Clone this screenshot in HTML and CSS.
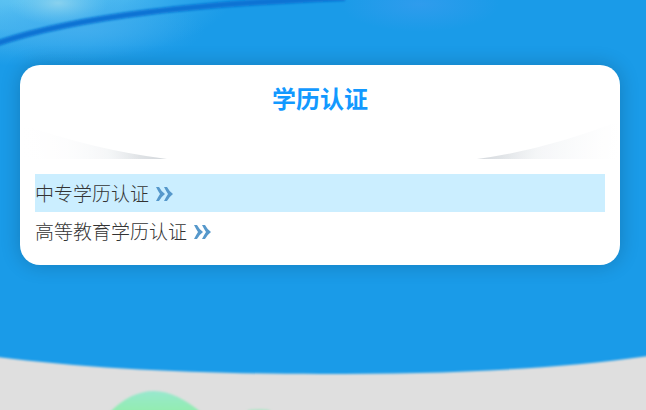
FILE: index.html
```html
<!DOCTYPE html>
<html lang="zh-CN">

<head>
    <meta charset="UTF-8">
    <meta name="viewport" content="width=device-width, initial-scale=1.0">
    <title>学历认证</title>
    <link rel="stylesheet" href="styles.css">
</head>

<body>
    <!-- Page background -->
    <svg class="page-bg" viewBox="0 0 646 410" preserveAspectRatio="none" aria-hidden="true">
        <defs>
            <radialGradient id="skyLight" gradientUnits="userSpaceOnUse" cx="0" cy="0" r="1" gradientTransform="translate(20 -8) scale(215 74)">
                <stop offset="0" stop-color="#62c6f3"/>
                <stop offset="0.5" stop-color="#54bdf1" stop-opacity="0.8"/>
                <stop offset="1" stop-color="#3fb0ee" stop-opacity="0"/>
            </radialGradient>
            <radialGradient id="skyLower" gradientUnits="userSpaceOnUse" cx="0" cy="0" r="1" gradientTransform="translate(85 30) scale(120 34)">
                <stop offset="0" stop-color="#42adee" stop-opacity="0.9"/>
                <stop offset="1" stop-color="#35a6ec" stop-opacity="0"/>
            </radialGradient>
            <radialGradient id="cloud" gradientUnits="userSpaceOnUse" cx="0" cy="0" r="1" gradientTransform="translate(58 3) scale(50 22)">
                <stop offset="0" stop-color="#8fd4ee" stop-opacity="0.9"/>
                <stop offset="1" stop-color="#70c8f0" stop-opacity="0"/>
            </radialGradient>
            <radialGradient id="glow" gradientUnits="userSpaceOnUse" cx="0" cy="0" r="1" gradientTransform="translate(420 4) scale(80 28)">
                <stop offset="0" stop-color="#349cee" stop-opacity="0.8"/>
                <stop offset="1" stop-color="#349cee" stop-opacity="0"/>
            </radialGradient>
            <linearGradient id="leaf" x1="0" y1="0" x2="0" y2="1">
                <stop offset="0" stop-color="#98e8cf"/>
                <stop offset="1" stop-color="#92edab"/>
            </linearGradient>
            <filter id="soft" x="-10%" y="-50%" width="120%" height="200%">
                <feGaussianBlur stdDeviation="1"/>
            </filter>
        </defs>
        <rect width="646" height="410" fill="#1a9be8"/>
        <rect width="240" height="80" fill="url(#skyLight)"/>
        <rect width="240" height="80" fill="url(#skyLower)"/>
        <rect width="120" height="30" fill="url(#cloud)"/>
        <rect x="330" width="180" height="34" fill="url(#glow)"/>
        <path d="M-5 44 C45 27 100 18 150 12 C205 5 265 1 345 -2" fill="none" stroke="#0873d4" stroke-width="6" filter="url(#soft)"/>
        <path d="M-10 356 C85 369 210 374 320 374 C440 374 555 370 656 355 V420 H-10 Z" fill="#dfdfdf" filter="url(#soft)"/>
        <path d="M108 414 C122 399 138 391 154 391 C170 391 187 400 203 414 Z" fill="url(#leaf)" filter="url(#soft)"/>
        <ellipse cx="259" cy="411" rx="12" ry="2" fill="#b3e5c8" filter="url(#soft)"/>
    </svg>

    <main class="card">
        <header class="card-header">
            <svg class="header-curve" viewBox="0 0 600 40" preserveAspectRatio="none" aria-hidden="true">
                <defs>
                    <linearGradient id="fadeLeft" gradientUnits="userSpaceOnUse" x1="20" y1="70" x2="140" y2="36">
                        <stop offset="0" stop-color="#fdfdfe"/>
                        <stop offset="0.6" stop-color="#f1f3f5"/>
                        <stop offset="1" stop-color="#d4d8dc"/>
                    </linearGradient>
                    <linearGradient id="fadeRight" gradientUnits="userSpaceOnUse" x1="584" y1="70" x2="464" y2="36">
                        <stop offset="0" stop-color="#fcfcfd"/>
                        <stop offset="0.6" stop-color="#f1f3f5"/>
                        <stop offset="1" stop-color="#d7dbdf"/>
                    </linearGradient>
                    <linearGradient id="edgeFade" x1="0" y1="0" x2="1" y2="0">
                        <stop offset="0" stop-color="#fff"/>
                        <stop offset="0.08" stop-color="#fff" stop-opacity="0.7"/>
                        <stop offset="0.2" stop-color="#fff" stop-opacity="0"/>
                        <stop offset="0.8" stop-color="#fff" stop-opacity="0"/>
                        <stop offset="0.95" stop-color="#fff" stop-opacity="0.6"/>
                        <stop offset="1" stop-color="#fff"/>
                    </linearGradient>
                </defs>
                <path d="M0 5 Q75 31 147 40 H0 Z" fill="url(#fadeLeft)"/>
                <path d="M600 2 Q525 31 457 40 H600 Z" fill="url(#fadeRight)"/>
                <rect width="600" height="40" fill="url(#edgeFade)"/>
            </svg>
            <h1>学历认证</h1>
        </header>

        <ul class="link-list">
            <li>
                <a class="link-item active" href="#secondary">中专学历认证
                    <svg class="arrow" viewBox="0 0 17 16" aria-hidden="true">
                        <path d="M0 2 H3 Q5 6 9 9 Q5 12 3 16 H0 Q2 12 4 9 Q2 6 0 2 Z M8 2 H11 Q13 6 17 9 Q13 12 11 16 H8 Q10 12 12 9 Q10 6 8 2 Z"/>
                    </svg>
                </a>
            </li>
            <li>
                <a class="link-item" href="#higher">高等教育学历认证
                    <svg class="arrow" viewBox="0 0 17 16" aria-hidden="true">
                        <path d="M0 2 H3 Q5 6 9 9 Q5 12 3 16 H0 Q2 12 4 9 Q2 6 0 2 Z M8 2 H11 Q13 6 17 9 Q13 12 11 16 H8 Q10 12 12 9 Q10 6 8 2 Z"/>
                    </svg>
                </a>
            </li>
        </ul>
    </main>
</body>

</html>
```

FILE: styles.css
```css
* {
    box-sizing: border-box;
}

body {
    font-family: "Noto Sans CJK SC", sans-serif;
    margin: 0;
    padding: 65px 26px 20px 20px;
    min-height: 100vh;
    background-color: #dfdfdf;
    color: #444;
}

.page-bg {
    position: absolute;
    top: 0;
    left: 0;
    width: 100%;
    height: 100%;
    z-index: -1;
}

.card {
    background: #fff;
    border-radius: 20px;
    box-shadow: 0 0 20px rgba(0, 0, 0, 0.2);
    overflow: hidden;
}

.card-header {
    position: relative;
    height: 94px;
    padding-top: 15px;
}

.header-curve {
    position: absolute;
    bottom: 0;
    left: 0;
    width: 100%;
    height: 40px;
}

.card-header h1 {
    position: relative;
    margin: 0;
    font-size: 24px;
    line-height: 36px;
    text-align: center;
    color: #1299ff;
}

.link-list {
    list-style: none;
    margin: 0;
    padding: 15px;
}

.link-item {
    display: flex;
    align-items: center;
    gap: 7px;
    font-size: 19px;
    font-weight: 300;
    line-height: 38px;
    color: #333;
    text-decoration: none;
}

.link-item.active,
.link-item:hover {
    background-color: #cbeeff;
}

.arrow {
    width: 17px;
    height: 16px;
    fill: #5698cb;
}
```
